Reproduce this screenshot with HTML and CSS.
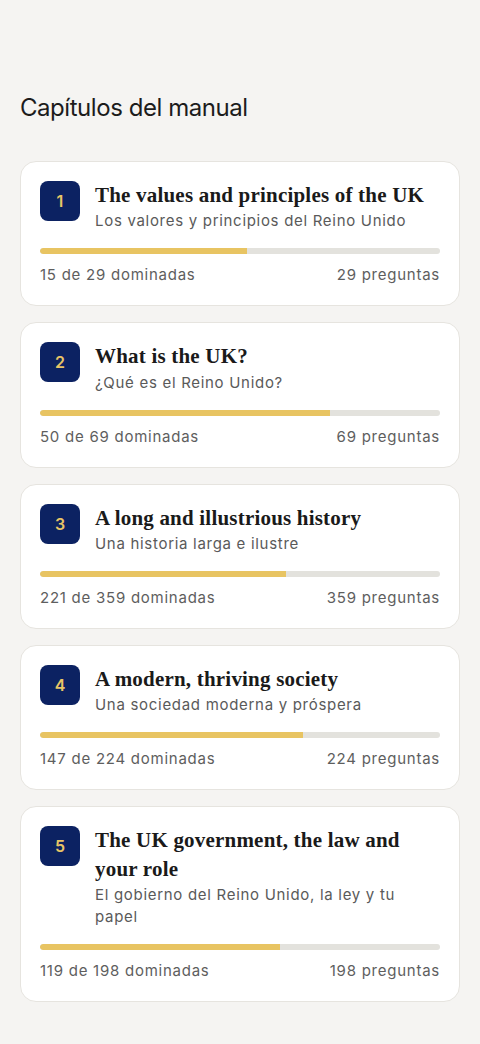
FILE: index.html
```html
<!DOCTYPE html>
<html lang="es">
<head>
<meta charset="utf-8">
<title>Capítulos del manual</title>
<link rel="stylesheet" href="styles.css">
</head>
<body>
<main class="page">
  <h1 class="page-title">Capítulos del manual</h1>
  <ul class="chapters">
    <li class="card">
      <div class="card-head">
        <div class="badge">1</div>
        <div class="titles">
          <h2 class="title">The values and principles of the UK</h2>
          <p class="subtitle">Los valores y principios del Reino Unido</p>
        </div>
      </div>
      <div class="bar"><div class="fill" style="width:51.72%"></div></div>
      <div class="stats"><span>15 de 29 dominadas</span><span>29 preguntas</span></div>
    </li>
    <li class="card">
      <div class="card-head">
        <div class="badge">2</div>
        <div class="titles">
          <h2 class="title">What is the UK?</h2>
          <p class="subtitle">¿Qué es el Reino Unido?</p>
        </div>
      </div>
      <div class="bar"><div class="fill" style="width:72.46%"></div></div>
      <div class="stats"><span>50 de 69 dominadas</span><span>69 preguntas</span></div>
    </li>
    <li class="card">
      <div class="card-head">
        <div class="badge">3</div>
        <div class="titles">
          <h2 class="title">A long and illustrious history</h2>
          <p class="subtitle">Una historia larga e ilustre</p>
        </div>
      </div>
      <div class="bar"><div class="fill" style="width:61.56%"></div></div>
      <div class="stats"><span>221 de 359 dominadas</span><span>359 preguntas</span></div>
    </li>
    <li class="card">
      <div class="card-head">
        <div class="badge">4</div>
        <div class="titles">
          <h2 class="title">A modern, thriving society</h2>
          <p class="subtitle">Una sociedad moderna y próspera</p>
        </div>
      </div>
      <div class="bar"><div class="fill" style="width:65.63%"></div></div>
      <div class="stats"><span>147 de 224 dominadas</span><span>224 preguntas</span></div>
    </li>
    <li class="card">
      <div class="card-head">
        <div class="badge">5</div>
        <div class="titles">
          <h2 class="title">The UK government, the law and your role</h2>
          <p class="subtitle">El gobierno del Reino Unido, la ley y tu papel</p>
        </div>
      </div>
      <div class="bar"><div class="fill" style="width:60.1%"></div></div>
      <div class="stats"><span>119 de 198 dominadas</span><span>198 preguntas</span></div>
    </li>
  </ul>
</main>
</body>
</html>
```
FILE: styles.css
```css
* { box-sizing: border-box; }
html, body { margin: 0; padding: 0; }
body {
  background: #f5f4f2;
  font-family: Inter, "Noto Sans", sans-serif;
  color: #1a1a1a;
}
.page {
  padding: 92px 20px 40px;
}
.page-title {
  margin: 0 0 37px;
  font-size: 24px;
  line-height: 32px;
  font-weight: 400;
  letter-spacing: -0.45px;
  color: #1c1c1c;
}
.chapters {
  list-style: none;
  margin: 0;
  padding: 0;
  display: flex;
  flex-direction: column;
  gap: 16px;
}
.card {
  background: #ffffff;
  border: 1px solid #e6e4df;
  border-radius: 16px;
  padding: 19px;
}
.card-head {
  display: flex;
  gap: 15px;
  align-items: flex-start;
}
.badge {
  flex: none;
  width: 40px;
  height: 40px;
  border-radius: 8px;
  background: #0c2262;
  color: #e8c566;
  font-size: 16px;
  font-weight: 600;
  display: flex;
  align-items: center;
  justify-content: center;
}
.titles { min-width: 0; }
.title {
  margin: 0;
  font-family: "Liberation Serif", serif;
  font-size: 21px;
  line-height: 29px;
  font-weight: 700;
  letter-spacing: 0.2px;
  color: #1a1a1a;
}
.subtitle {
  margin: 0.25px 0 0;
  font-size: 15px;
  line-height: 22px;
  color: #5a5a5a;
  letter-spacing: 0.7px;
}
.bar {
  margin-top: 16px;
  height: 6px;
  border-radius: 3px;
  background: #e3e2dd;
  overflow: hidden;
}
.fill {
  height: 100%;
  background: #e8c462;
  border-radius: 3px 0 0 3px;
}
.stats {
  margin-top: 10px;
  display: flex;
  justify-content: space-between;
  font-size: 15px;
  line-height: 22px;
  color: #5e5e5e;
  letter-spacing: 0.75px;
}
```
